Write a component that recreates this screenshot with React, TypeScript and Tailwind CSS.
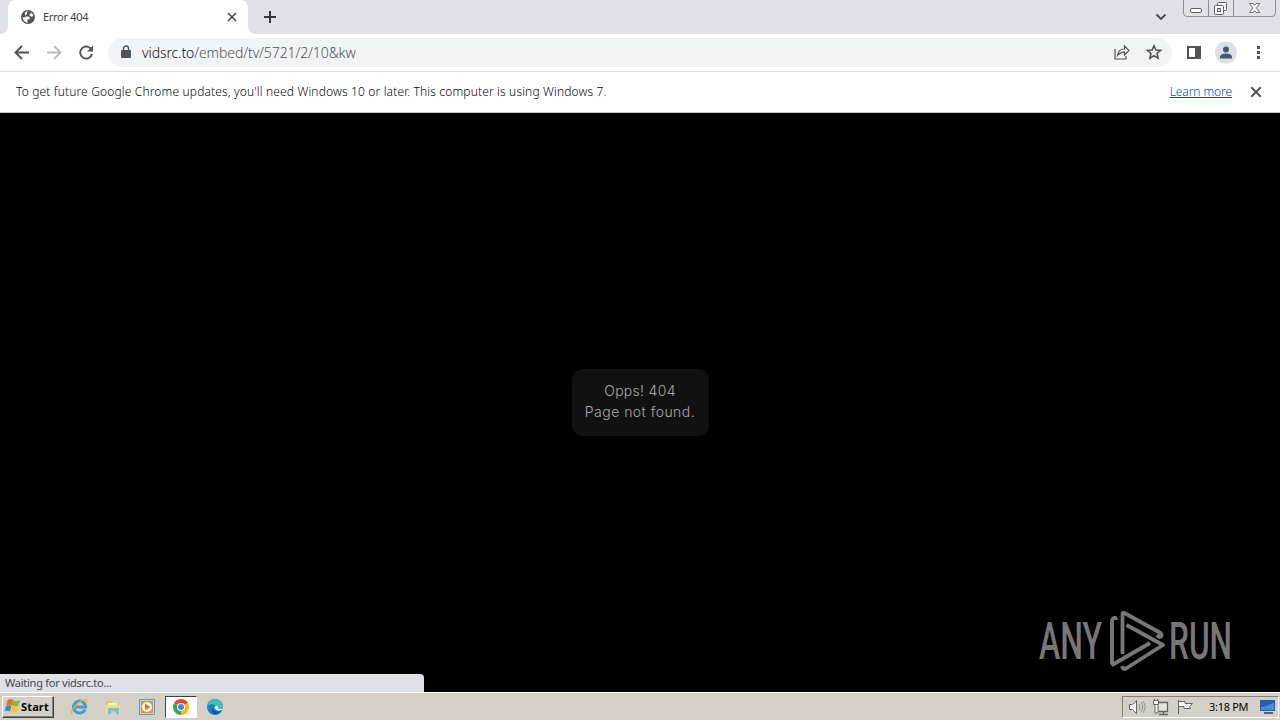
import type { ReactNode } from "react";

function Globe() {
  return (
    <svg width="16" height="16" viewBox="0 0 16 16" className="shrink-0">
      <circle cx="8" cy="8" r="7" fill="#505357" />
      <path d="M8.6 2.2 7 3.4v1.5L5.4 6v1.6h3.2l1 1.2v1.4H7.8l-.6 1.6.8 1.9a5.6 5.6 0 0 1-5.5-5.5l3 .2.6-1.4L4.7 4.4 6 2.8Z" fill="#fff" />
      <path d="M10.6 3.3c1.5.8 2.6 2 2.9 3.7l-1.8.8-1.9-.9-.5-1.3 1.4-.6Z" fill="#fff" />
    </svg>
  );
}

function Cross({ size = 10, color = "#45484c" }: { size?: number; color?: string }) {
  return (
    <svg width={size} height={size} viewBox="0 0 10 10" className="shrink-0">
      <path d="M1 1l8 8M9 1L1 9" stroke={color} strokeWidth="1.6" fill="none" />
    </svg>
  );
}

function WindowControls() {
  return (
    <svg width="94" height="18" viewBox="0 0 94 18" className="shrink-0">
      <path d="M.5 0v13q0 3.5 3.5 3.5h85q3.5 0 3.5-3.5V0M25.5 0v16M50.5 0v16" fill="none" stroke="#8b8e95" />
      <rect x="7.5" y="8.5" width="11" height="4" rx="1.5" fill="#fff" stroke="#5d6067" />
      <rect x="34.5" y="2.5" width="9" height="8" rx="1" fill="#eef0f4" stroke="#5d6067" />
      <rect x="31.5" y="5.5" width="9" height="9" rx="1" fill="#fff" stroke="#5d6067" />
      <rect x="34.5" y="8.5" width="3" height="3" fill="#dee1e6" stroke="#5d6067" />
      <path d="M66.5 3.5h3.5l1.6 2 1.6-2h3.5L73.5 8l3.2 4.5h-3.5l-1.6-2-1.6 2h-3.5L69.7 8Z" fill="#fff" stroke="#6c6f76" />
    </svg>
  );
}

function TabStrip() {
  return (
    <div className="flex h-[34px] bg-[#dee1e6]">
      <div className="flex w-2 items-end">
        <svg width="8" height="8"><path d="M8 0v8H0q8 0 8-8" fill="#fff" /></svg>
      </div>
      <div className="flex w-60 items-center rounded-t-lg bg-white pr-[11px] pl-3">
        <Globe />
        <span className="ml-[7px] flex-1 text-[11px] tracking-[-0.3px] text-[#3c4043]">Error 404</span>
        <Cross />
      </div>
      <div className="flex w-2 items-end">
        <svg width="8" height="8"><path d="M0 0v8h8q-8 0-8-8" fill="#fff" /></svg>
      </div>
      <svg width="12" height="12" className="mt-[11px] ml-2">
        <path d="M6 0v12M0 6h12" stroke="#35383d" strokeWidth="2" />
      </svg>
      <svg width="12" height="8" className="mt-[13px] ml-auto">
        <path d="M1.5 1.5 6 6l4.5-4.5" fill="none" stroke="#45484c" strokeWidth="1.8" />
      </svg>
      <div className="ml-4 w-[97px]">
        <WindowControls />
      </div>
    </div>
  );
}

function Toolbar() {
  return (
    <div className="flex h-[38px] items-center border-b border-[#dadce0] bg-white">
      <svg width="108" height="36" className="shrink-0" fill="none" strokeWidth="1.9">
        <path d="M29 17.500H16M22 11l-6.500 6.500 6.500 6.500" stroke="#505357" />
        <path d="M47 17.500h13M54 11l6.500 6.500-6.500 6.500" stroke="#b9bbbe" />
        <path d="M91.600 15A6 6 0 1 0 92 19" stroke="#505357" />
        <path d="M93 10.500v6h-6Z" fill="#505357" />
      </svg>
      <div className="flex h-[29px] w-[1064px] items-center rounded-full bg-[#f1f3f4]">
        <svg width="10" height="14" className="mb-0.5 ml-[13px]">
          <rect y="5" width="10" height="8" rx="1" fill="#505357" />
          <path d="M2.5 5.5V3.5a2.5 2.5 0 0 1 5 0v2" fill="none" stroke="#505357" strokeWidth="1.4" />
        </svg>
        <span className="ml-[11px] text-[14px] font-light tracking-[-0.1px] whitespace-nowrap text-[#505459]">
          <span className="text-[#101114]">vidsrc.to</span>/embed/tv/5721/2/10&amp;kw
        </span>
        <svg width="50" height="20" className="mr-2 mb-px ml-auto" fill="none" stroke="#505357" strokeWidth="1.2">
          <path d="M1 7v10h11v-3M3.500 13.500C4 9.500 6.500 7 10.500 7V4L15 8.500 10.500 13v-2.800C7.500 10 5.500 11 3.500 13.500Z" />
          <path d="m40 3.700 1.900 4.300 4.700.4-3.600 3.100 1.100 4.600-4.100-2.400-4.100 2.400 1.100-4.600-3.600-3.100 4.700-.4Z" strokeWidth="1.6" />
        </svg>
      </div>
      <svg width="108" height="36" className="shrink-0">
        <rect x="16" y="12" width="12" height="11" fill="none" stroke="#505357" strokeWidth="2" />
        <path d="M23 12h5v11h-5Z" fill="#505357" />
        <circle cx="54" cy="17.5" r="11" fill="#dcdfe3" />
        <circle cx="54" cy="14.5" r="3" fill="#485672" />
        <path d="M48 23.500V22q0-3.500 6-3.500t6 3.500v1.500Z" fill="#485672" />
        <path d="M85 11h3v3h-3zM85 16h3v3h-3zM85 21h3v3h-3z" fill="#505357" />
      </svg>
    </div>
  );
}

function InfoBar() {
  return (
    <div className="flex h-[41px] items-center border-b border-[#c6c9cc] bg-white pr-[18px] pl-4 text-[12px] text-[#08090b]">
      <span className="font-light tracking-[0.15px] whitespace-nowrap">
        To get future Google Chrome updates, you'll need Windows 10 or later. This computer is using Windows 7.
      </span>
      <a className="mr-[18px] ml-auto font-light tracking-[-0.08px] text-[#004cb0] underline">Learn more</a>
      <Cross size={12} color="#505357" />
    </div>
  );
}

function Watermark() {
  return (
    <svg
      width="200"
      height="70"
      className="absolute right-[42px] bottom-[15px] overflow-visible font-['Roboto',sans-serif]"
      fill="#777"
    >
      <text x="1" y="52" fontSize="51" fontWeight="500" textLength="63" lengthAdjust="spacingAndGlyphs">ANY</text>
      <text x="131" y="52" fontSize="51" fontWeight="500" textLength="63" lengthAdjust="spacingAndGlyphs">RUN</text>
      <g transform="translate(0 7)" fill="none" stroke="#777" strokeWidth="3.8" strokeLinejoin="round">
        <path d="M78 6q0-3-2-2t-2 4v41l1 1.500L112 29" />
        <path d="M84.500 40V0q0-2 2-1l36 20q2 2 .5 3.500t-4-1.500" />
        <path d="M88.500 11 125 31 88 54.500q-3 1.500-4-2.500" />
      </g>
    </svg>
  );
}

function Page() {
  return (
    <div className="relative flex flex-1 items-center justify-center bg-black">
      <div className="h-[67px] w-[137px] rounded-[11px] bg-[#111] pt-[11px] text-center font-['Inter',sans-serif] text-[14px] leading-[21px] font-light text-[#aaa]">
        <p className="tracking-[0.3px]">Opps! 404</p>
        <p className="tracking-[0.47px]">Page not found.</p>
      </div>
      <Watermark />
      <div className="absolute bottom-0 left-0 h-[18px] w-[424px] rounded-tr bg-[#dee1e6] pl-[5px] text-[11px] leading-[18px] tracking-[-0.25px] text-[#45484c]">
        Waiting for vidsrc.to...
      </div>
    </div>
  );
}

function TaskIcon({ children }: { children: ReactNode }) {
  return (
    <svg width="18" height="18" viewBox="0 0 18 18" className="shrink-0">
      {children}
    </svg>
  );
}

function Taskbar() {
  return (
    <div className="flex h-7 items-center border-t border-white bg-[#d4d0c8]">
      <div className="ml-0.5 flex h-[22px] w-[52px] items-center border border-t-white border-r-[#404040] border-b-[#404040] border-l-white pl-px shadow-[inset_-1px_-1px_#808080]">
        <svg width="17" height="17" viewBox="0 0 16 17" className="shrink-0">
          <path d="M3 2q3-2 6 0L7.200 7.500q-2.500-1.500-5.500 0Z" fill="#e96c2c" />
          <path d="M9 2.500q3 1.500 6.500-.5L14 7.500q-3 1.500-6.500 0Z" fill="#8ab833" />
          <path d="M1.500 8q2.500-1.500 5.500 0l-1.500 5.500q-2.500-1.500-5.500 0Z" fill="#3886d1" />
          <path d="M7.300 8.300q3 1.500 6.400 0L12.300 14q-3 1.500-6.500 0Z" fill="#f5c52c" />
        </svg>
        <span className="pt-0.5 text-[11px] font-bold tracking-[0.15px] text-black">Start</span>
      </div>
      <div className="ml-4 flex w-[95px] items-center gap-4">
        <TaskIcon>
          <path d="M15 11.500A6 6 0 1 1 15.500 9H5" fill="none" stroke="#3d9fda" strokeWidth="3" />
          <path d="M2.500 16.500C-2 14 10 1 16 2q1 1-.5 3" fill="none" stroke="#e3b53b" strokeWidth="1.4" />
        </TaskIcon>
        <TaskIcon>
          <path d="M2 3h5l1 2h7v9H2Z" fill="#e4c458" />
          <path d="M4 5h9v4H4Z" fill="#f7f2cb" />
          <path d="M1 7h15v9h-3v-4H5v4H2Z" fill="#f4dc85" />
          <path d="M4 10h11v6h-3v-3H7v3H4Z" fill="#78bde3" />
        </TaskIcon>
        <TaskIcon>
          <path d="M1.500 1.500h15v15h-15Z" fill="#b9dcf1" stroke="#559bca" />
          <rect x="3" y="3" width="12" height="12" fill="#ef8b25" />
          <circle cx="9" cy="9" r="5" fill="#fff" />
          <path d="M7 5.500v7L12.500 9Z" fill="#e3761c" />
        </TaskIcon>
      </div>
      <div className="flex h-[22px] w-8 items-center justify-center border border-t-[#404040] border-r-white border-b-white border-l-[#404040] bg-white">
        <TaskIcon>
          <path d="M9 9 2.070 5A8 8 0 0 1 15.930 5Z" fill="#e94235" />
          <path d="M9 9 15.930 5A8 8 0 0 1 9 17Z" fill="#fbbc05" />
          <path d="M9 9v8A8 8 0 0 1 2.070 5Z" fill="#34a853" />
          <circle cx="9" cy="9" r="4" fill="#fff" />
          <circle cx="9" cy="9" r="3" fill="#4285f4" />
        </TaskIcon>
      </div>
      <div className="ml-[9px]">
        <TaskIcon>
          <circle cx="9" cy="9" r="8" fill="#1680cf" />
          <path d="M1 8C2 2 7 0 11 1.300c5 1.500 7 6 5.500 9-1 2-5 2-6.500.7C12 8 8 4 1 8Z" fill="#3dbfb8" />
          <path d="M7 8c-2 4 3 7 8 5-5 7-12 2-8-5Z" fill="#164fa1" />
          <path d="M9 8q3-1 3 1-1 3 5 1.500v1q-5 2.500-8-.5-1-1 0-3Z" fill="#e8e9e7" />
        </TaskIcon>
      </div>
      <div className="mr-px ml-auto flex h-[22px] w-[157px] items-center border border-t-[#808080] border-r-white border-b-white border-l-[#808080] pr-0.5 pl-[5px]">
        <svg width="70" height="18" fill="none" stroke="#66645f" className="shrink-0">
          <path d="M1.500 6.500h3l4-4v13l-4-4h-3Z" fill="#fff" />
          <path d="M11 6q2 3 0 6M13 4q3.500 5 0 10M15 3q4 6 0 12" stroke="#96938b" />
          <path d="M29.500 4.500h10v9h-10zM31 16.500h9M35.500 14v2" fill="#e8e5df" strokeWidth="1.3" />
          <path d="M25.500 2.500h5v4h-5zM27 7v8h3V7M26.500 1v2M29.500 1v2" fill="#fff" />
          <path d="M50.500 2v14M51 3.500h6v2h7.500l-3 3 1 2H56v-2h-5" fill="#fff" />
        </svg>
        <span className="ml-[11px] pt-0.5 text-[11px] tracking-[-0.3px] whitespace-nowrap text-black">3:18 PM</span>
        <svg width="17" height="16" className="ml-auto shrink-0">
          <path d="M1 1h15v11H1Z" fill="#235fb1" />
          <path d="M2 8C7 8 12 5 15 3v8H2Z" fill="#4b8bd3" />
          <path d="M5 13h9v2H5Z" fill="#505f73" />
        </svg>
      </div>
    </div>
  );
}

export default function App() {
  return (
    <div className="flex h-[720px] w-[1280px] flex-col overflow-hidden font-['Noto_Sans',sans-serif]">
      <TabStrip />
      <Toolbar />
      <InfoBar />
      <Page />
      <Taskbar />
    </div>
  );
}
